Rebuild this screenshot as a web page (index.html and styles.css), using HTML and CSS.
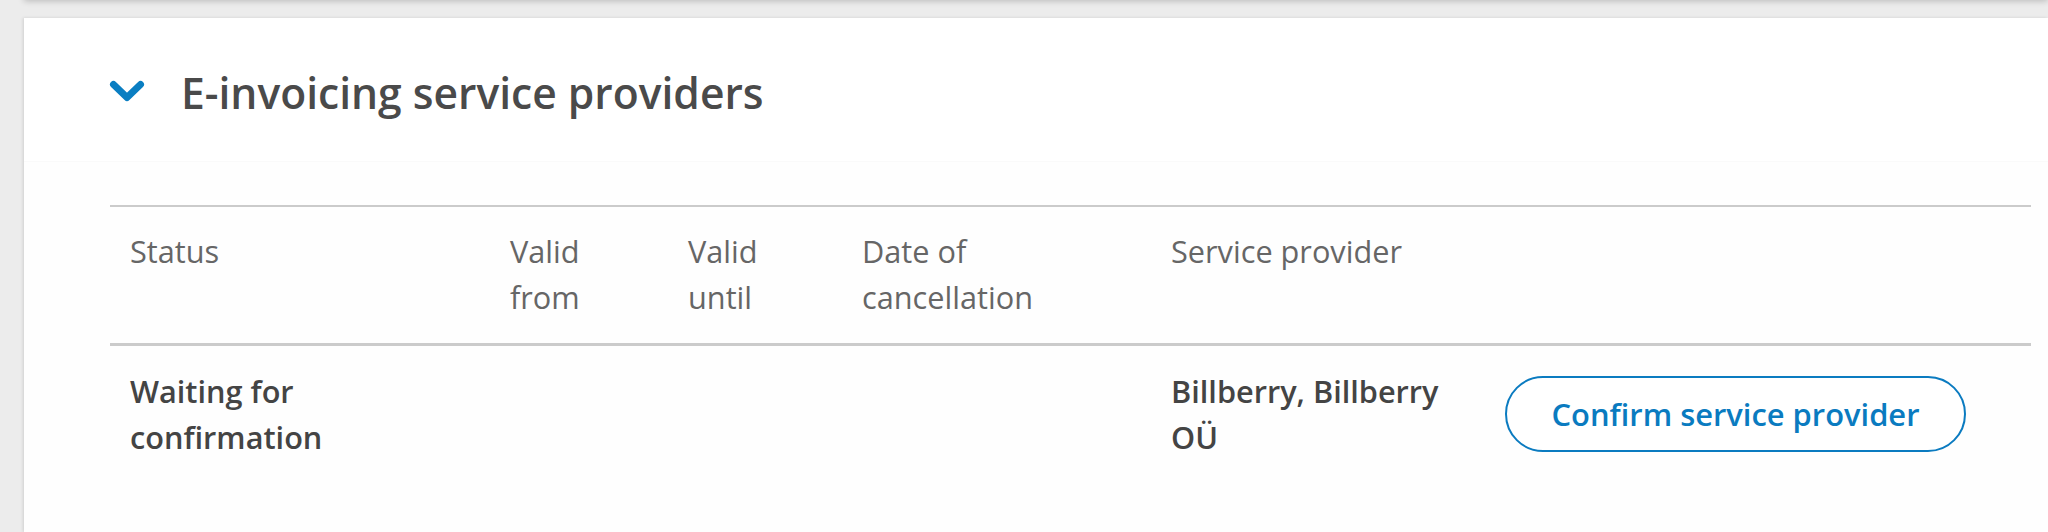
FILE: index.html
```html
<!DOCTYPE html>
<html lang="en">
<head>
<meta charset="utf-8">
<title>E-invoicing service providers</title>
<link rel="stylesheet" href="styles.css">
</head>
<body>
<div class="prev-card"></div>
<section class="card">
  <header class="card-head">
    <svg class="chevron" width="36" height="24" viewBox="0 0 36 24" aria-hidden="true">
      <path d="M4.5 4.5 L18 17.5 L31.5 4.5" fill="none" stroke="#0a7ec2" stroke-width="7" stroke-linecap="round" stroke-linejoin="round"/>
    </svg>
    <h2 class="title">E-invoicing service providers</h2>
  </header>
  <div class="card-body">
    <table class="providers">
      <colgroup>
        <col class="c-status">
        <col class="c-from">
        <col class="c-until">
        <col class="c-cancel">
        <col class="c-provider">
        <col class="c-action">
      </colgroup>
      <thead>
        <tr>
          <th>Status</th>
          <th>Valid from</th>
          <th>Valid until</th>
          <th>Date of cancellation</th>
          <th>Service provider</th>
          <th></th>
        </tr>
      </thead>
      <tbody>
        <tr>
          <td class="strong">Waiting for confirmation</td>
          <td></td>
          <td></td>
          <td></td>
          <td class="strong">Billberry, Billberry OÜ</td>
          <td class="action"><button class="btn-outline" type="button">Confirm service provider</button></td>
        </tr>
      </tbody>
    </table>
  </div>
</section>
</body>
</html>
```
FILE: styles.css
```css
html, body {
  margin: 0;
  padding: 0;
  overflow: hidden;
}
body {
  background: #ececec;
  font-family: "Open Sans", "Noto Sans", sans-serif;
  color: #444;
  width: 2048px;
  height: 532px;
}
.prev-card {
  height: 20px;
  margin-top: -20px;
  margin-left: 24px;
  background: #fff;
  box-shadow: 0 1px 6px rgba(0, 0, 0, 0.22);
}
.card {
  margin-top: 18px;
  margin-left: 24px;
  background: #fefefe;
  box-shadow: -1px 0 3px rgba(0, 0, 0, 0.12);
  height: 514px;
}
.card-head {
  display: flex;
  align-items: center;
  gap: 36px;
  padding: 49px 0 44px 85px;
  background: #fff;
  border-bottom: 1px solid #fafafa;
}
.chevron {
  display: block;
  flex: none;
}
.title {
  margin: 0;
  font-size: 42.6px;
  font-weight: 600;
  line-height: 50px;
  color: #4a4a4a;
}
.card-body {
  padding: 43px 17px 0 86px;
}
.providers {
  width: 1921px;
  border-collapse: collapse;
  table-layout: fixed;
}
.c-status { width: 380px; }
.c-from { width: 178px; }
.c-until { width: 174px; }
.c-cancel { width: 309px; }
.c-provider { width: 334px; }
.c-action { width: 546px; }
.providers th,
.providers td {
  padding: 21px 20px 23px;
  text-align: left;
  vertical-align: top;
  font-size: 30.7px;
  line-height: 46px;
}
.providers thead tr {
  border-top: 2px solid #cbcbcb;
}
.providers th {
  font-weight: 400;
  color: #666;
}
.providers tbody tr {
  border-top: 3px solid #cbcbcb;
}
.providers td {
  padding-top: 22px;
  padding-bottom: 22px;
}
.providers td.strong {
  font-weight: 600;
  color: #444;
}
.providers td.action {
  vertical-align: middle;
}
.btn-outline {
  display: block;
  box-sizing: border-box;
  width: 461px;
  height: 76px;
  padding: 0;
  border: 2px solid #0b7bc0;
  border-radius: 38px;
  background: #fff;
  color: #0a7bc0;
  font-family: "Open Sans", "Noto Sans", sans-serif;
  font-size: 30.9px;
  font-weight: 600;
  cursor: pointer;
}
```
